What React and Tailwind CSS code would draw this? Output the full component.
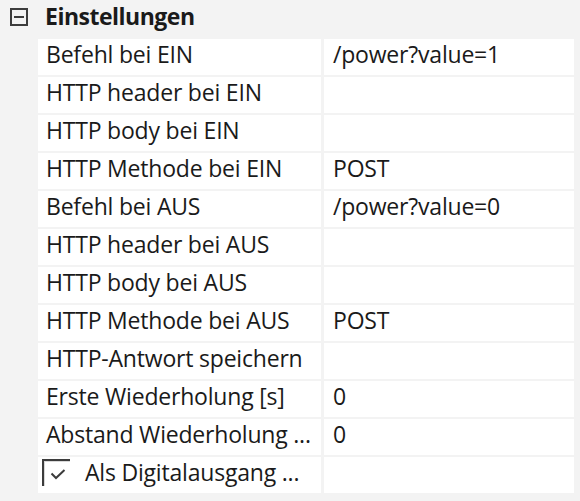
import React from "react";

const rows = [
  ["Befehl bei EIN", "/power?value=1"],
  ["HTTP header bei EIN", ""],
  ["HTTP body bei EIN", ""],
  ["HTTP Methode bei EIN", "POST"],
  ["Befehl bei AUS", "/power?value=0"],
  ["HTTP header bei AUS", ""],
  ["HTTP body bei AUS", ""],
  ["HTTP Methode bei AUS", "POST"],
  ["HTTP-Antwort speichern", ""],
  ["Erste Wiederholung [s]", "0"],
  ["Abstand Wiederholung ...", "0"],
];

export default function App() {
  return (
    <div
      className="w-[580px] h-[501px] bg-[#f3f3f3] text-[#1a1a1a] text-[23px] tracking-[-0.2px] overflow-hidden"
      style={{ fontFamily: '"Open Sans", "Noto Sans", sans-serif' }}
    >
      {/* Kategorie */}
      <div className="h-[39px] flex items-start">
        <div className="ml-[10px] mt-[8px] w-[18px] h-[18px] border-2 border-[#3c3c3c] flex items-center justify-center">
          <div className="w-[10px] h-[2px] bg-[#3c3c3c]" />
        </div>
        <span className="ml-[17px] mt-[1px] font-bold leading-[30px] tracking-[-0.5px]">Einstellungen</span>
      </div>

      <div className="ml-[38px] w-[536px] grid grid-cols-[283px_1fr] gap-x-[3px] gap-y-[2px]">
        {rows.map(([name, value]) => (
          <React.Fragment key={name}>
            <div className="h-[36px] bg-white pl-[8px] leading-[30px] whitespace-nowrap overflow-hidden">
              {name}
            </div>
            <div className="h-[36px] bg-white pl-[9px] leading-[30px] whitespace-nowrap overflow-hidden">
              {value}
            </div>
          </React.Fragment>
        ))}
        <div className="h-[36px] bg-white flex items-start pl-[4px] whitespace-nowrap overflow-hidden">
          <div className="mt-[2px] w-[28px] h-[27px] border-l-2 border-t-2 border-[#3c3c3c]">
            <div className="w-full h-full border-l border-t border-[#d8d8d8] relative">
              <svg className="absolute left-[5px] top-[7px]" width="16" height="11" viewBox="0 0 16 11">
                <path d="M1.5 4.5 L6 9 L14.5 1" fill="none" stroke="#3c3c3c" strokeWidth="2" />
              </svg>
            </div>
          </div>
          <span className="ml-[15px] leading-[30px]">Als Digitalausgang ...</span>
        </div>
        <div className="h-[36px] bg-white" />
      </div>
    </div>
  );
}
